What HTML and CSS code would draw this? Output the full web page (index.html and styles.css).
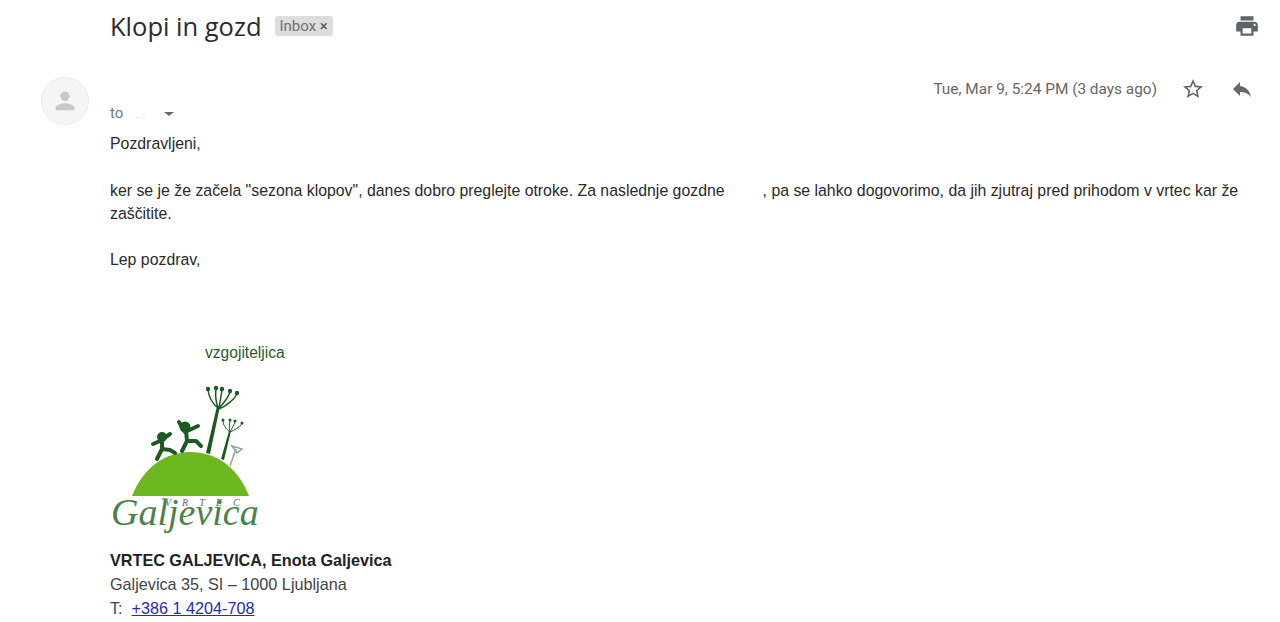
FILE: index.html
```html
<!DOCTYPE html>
<html lang="sl">
<head>
    <meta charset="UTF-8">
    <meta name="viewport" content="width=device-width, initial-scale=1.0">
    <title>Klopi in gozd</title>
    <link rel="stylesheet" href="styles.css">
</head>
<body>
    <!-- Subject -->
    <div class="subject-row">
        <h1 class="subject">Klopi in gozd</h1>
        <span class="label">Inbox <span class="label-x">&times;</span></span>
        <svg class="print-icon" viewBox="0 0 24 24" width="26" height="26">
            <path d="M19 8H5c-1.66 0-3 1.34-3 3v6h4v4h12v-4h4v-6c0-1.66-1.34-3-3-3zm-3 11H8v-5h8v5zm3-7c-.55 0-1-.45-1-1s.45-1 1-1 1 .45 1 1-.45 1-1 1zm-1-9H6v4h12V3z"/>
        </svg>
    </div>

    <div class="message">
        <div class="avatar">
            <svg viewBox="0 0 24 24" width="28" height="28">
                <path d="M12 12c2.200 0 4-1.800 4-4s-1.800-4-4-4-4 1.800-4 4 1.800 4 4 4zm0 2c-2.700 0-8 1.300-8 4v2h16v-2c0-2.700-5.300-4-8-4z"/>
            </svg>
        </div>

        <div class="message-main">
            <div class="meta-row">
                <div class="to">to <span class="to-name">.. .</span><span class="caret"></span></div>
                <div class="meta-right">
                    <span class="date">Tue, Mar 9, 5:24 PM (3 days ago)</span>
                    <svg class="star-icon" viewBox="0 0 24 24" width="24" height="24">
                        <path d="M22 9.240l-7.190-.62L12 2 9.190 8.630 2 9.240l5.460 4.730L5.820 21 12 17.270 18.180 21l-1.630-7.030L22 9.240zM12 15.400l-3.760 2.270 1-4.280-3.320-2.880 4.380-.38L12 6.100l1.710 4.040 4.380.38-3.320 2.880 1 4.280L12 15.400z"/>
                    </svg>
                    <svg class="reply-icon" viewBox="0 0 24 24" width="24" height="24">
                        <path d="M10 9V5l-7 7 7 7v-4.100c5 0 8.500 1.600 11 5.100-1-5-4-10-11-11z"/>
                    </svg>
                </div>
            </div>

            <div class="body-text">
                <p>Pozdravljeni,</p>
                <p>ker se je že začela "sezona klopov", danes dobro preglejte otroke. Za naslednje gozdne<span class="hidden-word"></span>, pa se lahko dogovorimo, da jih zjutraj pred prihodom v vrtec kar že zaščitite.</p>
                <p>Lep pozdrav,</p>
            </div>

            <div class="role"><span class="hidden-name"></span>vzgojiteljica</div>

            <!-- Logo vrtca -->
            <svg class="logo" viewBox="0 0 160 160" width="160" height="160">
                <path class="hill" d="M22 112 C33 84 55 68 80 68 C107 68 128 84 139 112 Z"/>

                <!-- otrok levo -->
                <circle class="dark" cx="52" cy="53" r="5"/>
                <path class="limb" d="M43 60 L50 57 L60 50 M52 57 L52 66 M52 65 L47 75 M52 65 L60 66 L65 69"/>
                <!-- otrok desno -->
                <circle class="dark" cx="75" cy="43" r="5.500"/>
                <path class="limb" d="M69 38 L75 48 L88 42 M76 47 L77 57 M77 57 L72 67 M77 57 L86 57 L91 62"/>

                <!-- rastlina velika -->
                <path class="dark" d="M96 69 L107 22 L110 22 L100 70 Z"/>
                <path class="stem" d="M108 24 C103 20 99 14 98 6 M108 24 C106 18 105 12 106 5 M109 24 C110 18 111 12 112 6 M109 24 C114 19 118 14 120 8 M109 25 C116 22 124 16 127 10"/>
                <circle class="dark" cx="98" cy="5" r="2.200"/>
                <circle class="dark" cx="106" cy="4" r="2.200"/>
                <circle class="dark" cx="112" cy="5" r="2.200"/>
                <circle class="dark" cx="120" cy="7" r="2.200"/>
                <circle class="dark" cx="127" cy="9" r="2.200"/>

                <!-- rastlina manjsa -->
                <path class="dark" d="M111 75 L119 47 L121 47 L114 76 Z"/>
                <path class="stem thin" d="M120 48 C116 45 113 41 113 37 M120 48 C119 44 119 41 120 37 M120 48 C122 44 124 41 125 38 M120 48 C125 46 129 43 132 40"/>
                <circle class="dark" cx="113" cy="36" r="1.500"/>
                <circle class="dark" cx="120" cy="36" r="1.500"/>
                <circle class="dark" cx="125" cy="37" r="1.500"/>
                <circle class="dark" cx="132" cy="39" r="1.500"/>

                <path class="stem grey" d="M120 82 L126 65 M122 62 L132 65 L127 69 Z"/>

                <text class="logo-vrtec" x="55" y="122">VRTEC</text>
                <text class="logo-name" x="1" y="141">Galjevica</text>
            </svg>

            <div class="signature">
                <div class="sig-name">VRTEC GALJEVICA, Enota Galjevica</div>
                <div>Galjevica 35, SI – 1000 Ljubljana</div>
                <div>T:&nbsp; <a href="#">+386 1 4204-708</a></div>
            </div>
        </div>
    </div>
</body>
</html>
```

FILE: styles.css
```css
body, html {
    margin: 0;
    height: 100%;
    overflow: hidden;
    background-color: #fff;
    font-family: "Liberation Sans", Arial, sans-serif;
}

.subject-row {
    display: flex;
    align-items: center;
    height: 52px;
    padding: 0 20px 0 110px;
}

.subject {
    margin: 0;
    font-family: "Open Sans", sans-serif;
    font-size: 25.500px;
    font-weight: 400;
    color: #2a2a2a;
}

.label {
    margin-left: 13px;
    padding: 1px 5px;
    border-radius: 3px;
    background-color: #ddd;
    color: #707070;
    font-family: Roboto, sans-serif;
    font-size: 15px;
}

.label-x {
    color: #555;
}

.print-icon {
    margin-left: auto;
    fill: #5f6368;
}

.message {
    display: flex;
    padding: 25px 0 0 41px;
}

.avatar {
    display: flex;
    align-items: center;
    justify-content: center;
    flex: none;
    box-sizing: border-box;
    width: 48px;
    height: 48px;
    border: 1px solid #ececec;
    border-radius: 50%;
    background-color: #f5f5f5;
    fill: #c8c8c8;
}

.message-main {
    flex: 1;
    margin-left: 21px;
    padding-right: 26px;
}

.meta-row {
    display: flex;
    justify-content: space-between;
    height: 55px;
}

.to {
    margin-top: 27px;
    color: #777;
    font-family: Roboto, sans-serif;
    font-size: 15px;
}

.to-name {
    margin-left: 8px;
    color: #ccc;
    font-size: 10px;
}

.caret {
    display: inline-block;
    margin-left: 19px;
    margin-bottom: 2px;
    border-top: 4px solid #666;
    border-left: 5px solid transparent;
    border-right: 5px solid transparent;
}

.meta-right {
    display: flex;
    align-items: center;
    height: 24px;
    color: #666;
    font-family: Roboto, sans-serif;
    font-size: 15.400px;
}

.star-icon {
    margin-left: 24px;
    fill: #666;
}

.reply-icon {
    margin-left: 25px;
    fill: #666;
}

.body-text {
    color: #2a2a2a;
    font-size: 15.850px;
    line-height: 23.300px;
}

.body-text p {
    margin: 0 0 23.300px;
}

.hidden-word {
    display: inline-block;
    width: 38px;
}

.role {
    margin-top: 69px;
    color: #2b5a2b;
    font-size: 15.600px;
    line-height: 23px;
}

.hidden-name {
    display: inline-block;
    width: 95px;
}

.logo {
    display: block;
    margin-top: 20px;
}

.hill {
    fill: #6db71f;
}

.dark {
    fill: #1d5a22;
}

.limb {
    fill: none;
    stroke: #1d5a22;
    stroke-width: 4;
    stroke-linecap: round;
    stroke-linejoin: round;
}

.stem {
    fill: none;
    stroke: #1d5a22;
    stroke-width: 1.500;
}

.stem.thin {
    stroke-width: 1;
}

.stem.grey {
    stroke: #8fa886;
    stroke-width: 1.500;
}

.logo-vrtec {
    fill: #666;
    font-family: "Liberation Serif", serif;
    font-size: 10px;
    font-style: italic;
    letter-spacing: 11px;
}

.logo-name {
    fill: #4a8348;
    font-family: "Liberation Serif", serif;
    font-size: 38px;
    font-style: italic;
}

.signature {
    margin-top: 4px;
    color: #444;
    font-size: 16.200px;
    line-height: 24px;
}

.sig-name {
    color: #222;
    font-weight: bold;
}

.signature a {
    color: #2a2ab0;
}
```
